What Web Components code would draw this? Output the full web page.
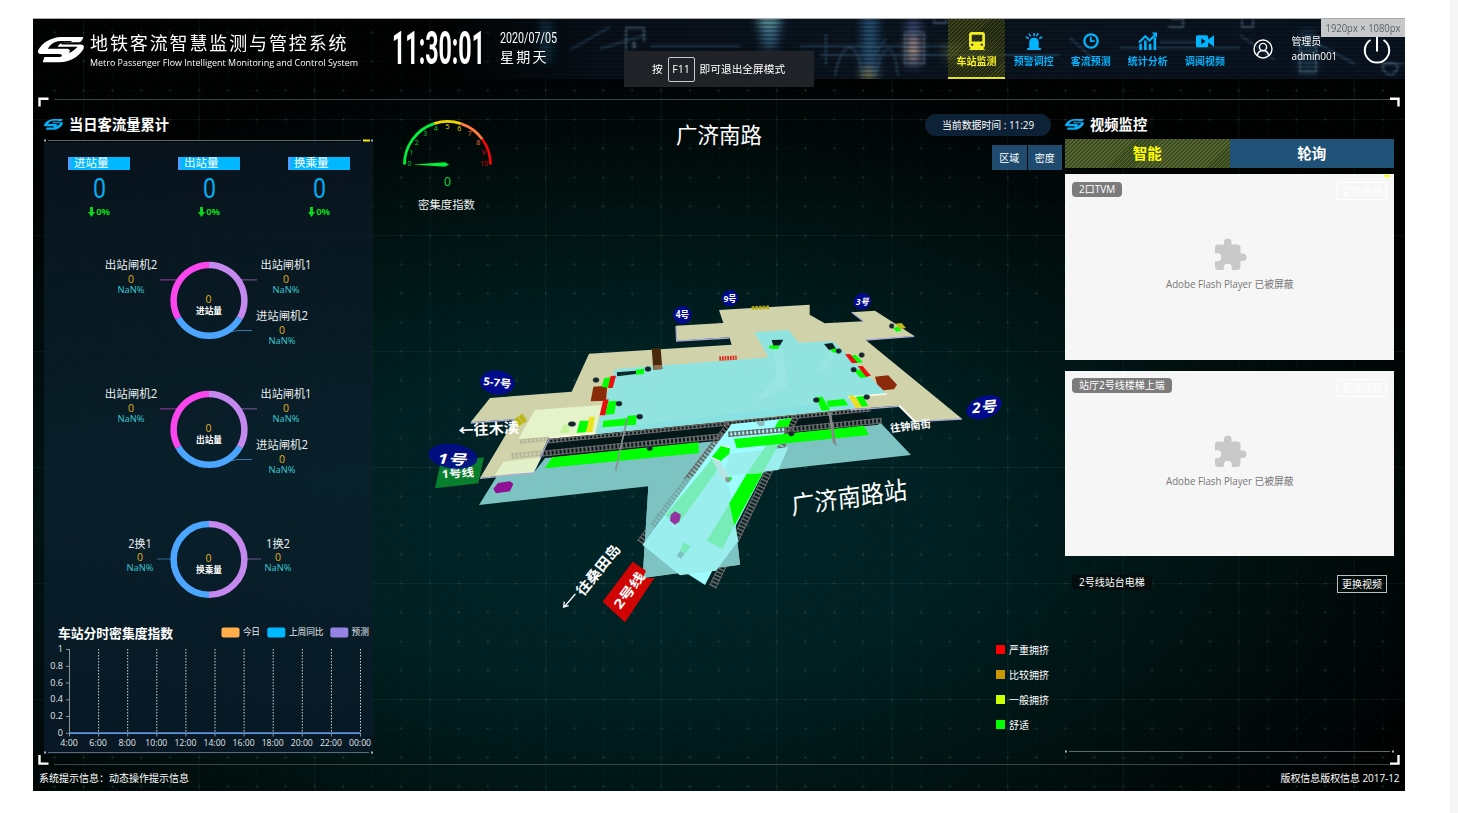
<!DOCTYPE html>
<html>
<head>
<meta charset="utf-8">
<title>地铁客流智慧监测与管控系统</title>
<style>
html{background:#fff}
body{margin:0;width:1458px;height:813px;overflow:hidden;display:flex;justify-content:space-between;background:#fff;font-family:"Open Sans","Noto Sans CJK SC",sans-serif;color:#fff}
.gutter{width:8px;background:#f6f6f6}
</style>
</head>
<body>
<metro-dashboard></metro-dashboard>
<div class="gutter"></div>
<script>
const define=(name,render,setup)=>customElements.define(name,class extends HTMLElement{
  connectedCallback(){
    if(this.shadowRoot)return;
    const root=this.attachShadow({mode:'open'});
    root.innerHTML=render(n=>this.getAttribute(n)||'',this);
    if(setup)setup(this,root);
  }
});
const F='font-family:"Open Sans","Noto Sans CJK SC",sans-serif';

/* Single line of text squeezed to a fixed width */
define('fit-text',a=>`<style>:host{display:block;line-height:0}svg{display:block;overflow:visible}text{font-family:Roboto,sans-serif}</style>
<svg width="${a('w')}" height="${a('h')}"><text x="0" y="${a('h')}" font-size="${a('size')}" font-weight="${a('weight')||400}" fill="currentColor" textLength="${a('w')}" lengthAdjust="spacingAndGlyphs">${a('text')}</text></svg>`);

define('metro-logo',()=>`<style>:host{display:block;color:#fff}svg{display:block;width:100%;height:100%}</style>
<svg viewBox="0 0 136 78" preserveAspectRatio="none"><path fill="currentColor" d="M134 0H68C38 1 12 18 1 40c-3 8 1 12 9 12h54c9 0 9 9 0 9H19l-5 16h48c34 0 58-17 71-38 6-11 1-16-8-16H74c-8 0-7-7 1-7h49c5-3 8-8 10-16z"/><path fill="#000" d="M66 12C48 13 35 24 29 36h55c11 0 13 7 6 14 12-5 21-13 27-20H58c4-10 14-15 30-15h10l2-3z"/></svg>`);

/* Bracketed frame around the working area */
define('screen-frame',()=>`<style>:host{position:absolute;left:5px;top:78px;width:1362px;height:668px;pointer-events:none}svg{display:block}</style>
<svg width="1362" height="668" fill="none"><path stroke="#3d4444" d="M16 2.5H1352M16 667.500H1352"/><path stroke="#fff" stroke-width="2.4" d="M1.5 9.500V1.700H10.500M1352 1.700H1360.500V9.500M1.500 658V666.600H10.500M1352 666.600H1360.500V658"/></svg>`);

define('header-art',()=>`<style>:host{position:absolute;inset:0 0 auto 0;height:60px;overflow:hidden}svg{display:block}</style>
<svg width="1372" height="60" viewBox="33 19 1372 60"><defs>
<linearGradient id="f" x1="33" x2="1405" gradientUnits="userSpaceOnUse"><stop offset=".3" stop-color="#071018" stop-opacity="0"/><stop offset=".42" stop-color="#08111a"/><stop offset=".62" stop-color="#0b1520"/><stop offset="1" stop-color="#091420"/></linearGradient>
<filter id="b" x="-1" y="-1" width="3" height="3"><feGaussianBlur stdDeviation="5"/></filter><filter id="c"><feGaussianBlur stdDeviation="1.1"/></filter>
<pattern id="s" width="6" height="4" patternUnits="userSpaceOnUse"><path d="M0 1H6" stroke="#02060c" stroke-opacity=".6"/></pattern></defs>
<rect x="33" y="19" width="1372" height="60" fill="url(#f)"/>
<g filter="url(#b)"><path d="M757 12H783L776 48H763z" fill="#356482" opacity=".9"/><ellipse cx="768" cy="20" rx="11" ry="10" fill="#5e9298" opacity=".8"/><path d="M862 10H878V80H862z" fill="#2c577d" opacity=".85"/><ellipse cx="868" cy="75" rx="7" ry="5" fill="#8a8a48"/><path d="M907 19H920V66H907z" fill="#48598c" opacity=".8"/><ellipse cx="913" cy="49" rx="6" ry="12" fill="#b49b92"/><path d="M540 20H552V62H540z" fill="#164052" opacity=".7"/><path d="M1300 30H1316V74H1300z" fill="#294b64" opacity=".6"/><path d="M940 45H1000L980 65H950z" fill="#6a7146" opacity=".5"/></g>
<g filter="url(#c)" fill="none" stroke="#3c6382" stroke-width="2" opacity=".55"><path d="M570 50L610 27M600 49L645 35M650 46H740M800 46H960M820 55H1060M835 76C842 38 858 38 863 78M875 76C884 40 894 40 898 76M826 34V65M874 55L886 39M1070 38L1095 60M1120 48H1240M1160 42H1200M1240 35L1275 60M1320 45L1355 64M1380 64H1405"/></g>
<g filter="url(#c)" fill="none" stroke="#59738c" opacity=".65"><path stroke-width="2" d="M626 51V28H644V42M905 33H924V64H905zM1171 19H1183V27H1168M1242 19V27H1253V19M1300 45V72H1316V45M934 19V23H946V19M1390 75C1380 70 1380 63 1390 63C1400 63 1400 70 1391 75"/><path fill="#75879b" d="M634 41l2 4-2 4-2-4z"/></g>
<rect x="500" y="19" width="905" height="60" fill="url(#s)"/></svg>`);

const ICONS={
 train:'<path fill="currentColor" fill-rule="evenodd" d="M3.500 0h10q2.500 0 2.500 2.500v10.500q0 2-2 2H3q-2 0-2-2V2.500Q1 0 3.500 0zM3.500 2.500v6.500h10V2.500zM3 11v2h2v-2zm9 0v2h2v-2z"/><path fill="currentColor" d="M3 14.500L1 17h15l-2-2.500z"/>',
 alarm:'<path fill="currentColor" d="M4 15V10q0-4.500 4.500-4.500T13 10v5h2v2H2v-2zM7.800 1h1.500v3H7.800zM3 2l1-.8 2.200 2.600-1 .8zM12 .8l1.200.8L11 4.500 10 3.700zM.5 5.500L1 4l3 1.500-.6 1.300zM16 4l.7 1.400-3 1.400-.7-1.300z"/>',
 clock:'<g fill="none" stroke="currentColor" stroke-width="2.200"><circle cx="8.500" cy="8.500" r="6.300"/><path d="M8.300 4.500v4.200H12" stroke-width="1.700"/></g>',
 stats:'<path fill="none" stroke="currentColor" stroke-width="2.400" d="M1.500 17v-6M6 17V8M10.500 17v-6M15 17V5"/><path fill="none" stroke="currentColor" stroke-width="2" d="M0 10l6-6 4 4 6-6"/><path fill="currentColor" d="M12 .5h5v5z"/>',
 video:'<path fill="currentColor" fill-rule="evenodd" d="M1.500 3H10q1.500 0 1.500 1.500V7L17 3v11l-5.500-4v3q0 1.500-1.500 1.500H1.500Q0 14.500 0 13V4.500Q0 3 1.500 3zM5 6v5.500l4-2.700z"/>'
};
define('nav-item',a=>`<style>:host{display:flex;box-sizing:border-box;width:57.100px;height:60px;padding-top:12.500px;flex-direction:column;align-items:center;color:#00b4ff;font-size:10px;font-weight:700;line-height:15px}
:host([active]){color:#f4f020;background:repeating-linear-gradient(135deg,#656b1c99 0 1px,#30350c99 1px 2.800px);border-bottom:2px solid #e6e22a}
svg{width:18px;height:18px;margin-bottom:4.500px;overflow:visible}</style><svg viewBox="0 0 17 17">${ICONS[a('icon')]}</svg><span><slot></slot></span>`);

define('top-bar',()=>`<style>
:host{display:flex;position:relative;height:60px;flex:none}
.brand,.clock,.date,nav,.user,.power{position:relative}
metro-logo.l{width:46px;height:25.500px;margin:18px 0 0 5px;position:relative}
.brand{margin-left:6px;width:302px;white-space:nowrap}
.t{font-size:18px;letter-spacing:1.880px;line-height:24px;margin-top:12px}
.s{font-size:8.800px;line-height:12px;margin-top:.5px;letter-spacing:0}
.clock{padding-top:12px;width:108px}
.date{padding-top:12px;width:448px}
.w{font-size:14px;letter-spacing:2.300px;line-height:18px;margin-top:4.500px}
nav{display:flex}
.user{display:flex;padding-left:20px;width:130px;box-sizing:border-box;gap:18px;font-size:10px;line-height:15px;padding-top:15px;white-space:nowrap;letter-spacing:-.15px}
.user svg{margin-top:5px}
.power{padding-top:15.500px}
svg{display:block;flex:none}
</style><header-art></header-art><metro-logo class="l"></metro-logo>
<div class="brand"><div class="t">地铁客流智慧监测与管控系统</div><div class="s"><svg width="268" height="13" style="overflow:visible"><text x="0" y="9.500" fill="#fff" font-size="9.200" textLength="268" lengthAdjust="spacingAndGlyphs">Metro Passenger Flow Intelligent Monitoring and Control System</text></svg></div></div>
<div class="clock"><fit-text w="93" h="33" size="46" weight="700" text="11:30:01"></fit-text></div>
<div class="date"><fit-text w="57" h="12" size="15.500" weight="400" text="2020/07/05"></fit-text><div class="w">星期天</div></div>
<nav><nav-item icon="train" active>车站监测</nav-item><nav-item icon="alarm">预警调控</nav-item><nav-item icon="clock">客流预测</nav-item><nav-item icon="stats">统计分析</nav-item><nav-item icon="video">调阅视频</nav-item></nav>
<div class="user"><svg width="20" height="20" viewBox="0 0 20 20" fill="none" stroke="#fff" stroke-width="1.400"><circle cx="10" cy="10" r="9"/><circle cx="10" cy="8" r="3.600"/><path d="M4.500 16q1-4.500 5.500-4.500t5.500 4.500"/></svg><div>管理员<br>admin001</div></div>
<div class="power"><svg width="28" height="30" viewBox="0 0 28 30" fill="none" stroke="#fff" stroke-width="2"><path d="M7.500 5A12.200 12.200 0 1 0 20.500 5M14 1.500v15"/></svg></div>`);

define('panel-title',()=>`<style>:host{display:flex;height:29px;align-items:center;gap:6px;font-size:14.300px;font-weight:700;line-height:20px}metro-logo{width:19px;height:11px;color:#0aaef4}span{padding-top:2px}</style><metro-logo></metro-logo><span><slot></slot></span>`);
define('panel-rule',(a,e)=>`<style>:host{display:block;height:3px}svg{display:block}</style><svg width="329" height="3"><path stroke="#5d6a70" d="M4 1.500H${e.hasAttribute('accent')?317:325}"/><path stroke="#aab4b8" stroke-width="2" d="M0 1.500H2M327 1.500H329"/>${e.hasAttribute('accent')?'<path stroke="#f4ee10" stroke-width="2" d="M319 1.500H326"/>':''}</svg>`);

define('stat-card',a=>`<style>:host{display:flex;flex-direction:column;align-items:center;width:62px}
.l{box-sizing:border-box;width:62px;height:13px;background:#00b8ff;border-left:3px solid #4b9cff;padding-left:3px;font-size:11.500px;line-height:12px}
fit-text{margin-top:8px;color:#06adf0}.p{display:flex;gap:1px;align-items:center;font-size:9.500px;font-weight:700;line-height:12px;color:#0bd61d;margin-top:9px;letter-spacing:-.3px}</style>
<div class="l"><slot></slot></div><fit-text w="13" h="19.500" size="27" weight="400" text="${a('value')}"></fit-text>
<div class="p"><svg width="7" height="10"><path fill="#0bd61d" d="M2 0h3v5h2L3.500 10 0 5h2z"/></svg><span>0%</span></div>`);

const tx=(s,x,y,size,fill,w,extra='')=>`<text x="${x}" y="${y}" font-size="${size}" fill="${fill}" text-anchor="middle" ${w?`textLength="${w}" lengthAdjust="spacingAndGlyphs"`:''} ${extra}>${s}</text>`;
const lab=(s,x,y,w)=>tx(s,x,y,11.7,'#eceff0',w)+tx('0',x,y+13.700,10.500,'#e3b021')+tx('NaN%',x,y+23.500,9,'#3cc8d4',27);
define('flow-donut',(a,e)=>{
  const two=e.hasAttribute('two'),R=35.4,cx=165,cy=64.400;
  const arc=(d0,d1,c)=>{const p=d=>[cx+R*Math.sin(d*Math.PI/180),cy-R*Math.cos(d*Math.PI/180)].map(v=>v.toFixed(2)).join(' ');return `<path d="M${p(d0)}A${R} ${R} 0 0 1 ${p(d1)}" fill="none" stroke="${c}" stroke-width="6.500"/>`};
  return `<style>:host{display:block;height:128.900px}svg{display:block}text{${F}}</style><svg width="329" height="128.900">`+
  (two?`<path d="M113 64H127" stroke="#326695"/><path d="M203 64H217" stroke="#77569a"/>`+arc(0,180,'#c488ee')+arc(180,360,'#4ca5ff')+lab('2换1',96,52.500,23.500)+lab('1换2',234,52.500,24)
  :`<path d="M116 43.900H133" stroke="#a03aa5"/><path d="M197 43.900H213" stroke="#805ca0"/><path d="M187 96L193 94.500H208" fill="none" stroke="#357ab5"/>`+arc(0,120,'#c488ee')+arc(120,240,'#4ca5ff')+arc(240,360,'#fb45ee')+lab('出站闸机2',87,33,52.500)+lab('出站闸机1',242,33,51)+lab('进站闸机2',238,84,52))+
  tx('0',164.500,67,10.500,'#e3b021')+tx(a('label'),165,77.700,8.700,'#fff',26,'font-weight="700"')+`</svg>`});

define('density-chart',()=>{
  let s='';
  for(let i=0;i<6;i++){const y=25.500+i*16.760;s+=`<path stroke="#8b949a" d="M22 ${y.toFixed(1)}H25.500"/><text x="19" y="${y+2.500}" font-size="9" text-anchor="end" fill="#e2e6e8">${['1','0.8','0.6','0.4','0.2','0'][i]}</text>`}
  for(let i=0;i<11;i++){const x=25.500+i*29.100;if(i)s+=`<path stroke="#d0d4d6" stroke-dasharray="1.500 1.500" d="M${x} 25V109"/>`;s+=`<path stroke="#8b949a" d="M${x} 109v3.500"/>`+tx(['4:00','6:00','8:00','10:00','12:00','14:00','16:00','18:00','20:00','22:00','00:00'][i],x-.5,121.500,9,'#e2e6e8',i<3?17.500:22)}
  const lg=(x,c,t,tx0,w)=>`<rect x="${x}" y="3.500" width="18" height="10" rx="2" fill="${c}"/><text x="${tx0}" y="11" font-size="8.700" fill="#e8edf0" textLength="${w}">${t}</text>`;
  return `<style>:host{display:block;height:127px}svg{display:block;overflow:visible}text{${F}}</style><svg width="329" height="127"><text x="14" y="13.800" font-size="12.800" font-weight="700" fill="#fff" textLength="115">车站分时密集度指数</text>${lg(177.500,'#ffae4b','今日',199,17)+lg(223.300,'#00b8ff','上周同比',245,34.500)+lg(286.300,'#9583e4','预测',307.500,17.500)}<path stroke="#8b949a" d="M25.500 25V112"/>${s}<path stroke="#9583e4" stroke-width="1.600" d="M25.500 109.200H316.500"/><path stroke="#38a4dd" stroke-width="1.600" stroke-dasharray="2 1" d="M25.500 109H316.500"/></svg>`});

define('left-panel',()=>`<style>:host{display:block}.body{height:612px;background:linear-gradient(#09151fe6,#09202be6 55%,#081927e6);display:flex;flex-direction:column}
.stats{display:flex;justify-content:space-between;padding:15.200px 23px 0 24px;height:81.100px}
.c{margin-top:auto}</style>
<panel-title>当日客流量累计</panel-title><panel-rule accent></panel-rule><div class="body"><div class="stats"><stat-card value="0">进站量</stat-card><stat-card value="0">出站量</stat-card><stat-card value="0">换乘量</stat-card></div>
<div class="donuts"><flow-donut label="进站量"></flow-donut><flow-donut label="出站量"></flow-donut><flow-donut two label="换乘量" style="margin-top:.7px"></flow-donut></div><density-chart class="c"></density-chart><panel-rule></panel-rule></div>`);

define('density-gauge',()=>{
  const cx=74.500,cy=54.500,pt=(r,v)=>{const t=Math.PI*(1-v/10);return [(cx+r*Math.cos(t)).toFixed(1),(cy-r*Math.sin(t)).toFixed(1)]};
  const arc=(a,b,c)=>`<path fill="none" stroke="${c}" stroke-width="2.800" d="M${pt(43,a)}A43 43 0 0 1 ${pt(43,b)}"/>`;
  let s=arc(0,4,'#00f03c')+arc(4,6,'#f0d800')+arc(6,8,'#ff7a40')+arc(8,10,'#ee0808');
  for(let v=0;v<=10;v++){const p=pt(v==10?36.500:38,v);s+=`<text x="${p[0]}" y="${+p[1]+(v==0||v==10?1:2.500)}" font-size="7" text-anchor="middle" fill="${v<5?'#00c83f':v<7?'#f0dc00':v<9?'#f0703c':'#c81010'}">${v}</text>`}
  return `<style>:host{display:block}svg{display:block;overflow:visible}text{${F}}</style><svg width="150" height="104">${s}<path fill="#00f03c" d="M40 54.500L72 52.300l4 2.200-4 2.200z"/>${tx('0',74.500,75.500,12.500,'#0bd840')}${tx('密集度指数',73.500,99,11.400,'#eceeee',57)}</svg>`});

define('status-legend',()=>`<style>:host{display:grid;gap:15px}div{display:flex;gap:4px;height:10px;align-items:center;font-size:10px;line-height:10px}i{width:9px;height:9px;background:var(--c)}</style><div style="--c:#ff0000"><i></i>严重拥挤</div><div style="--c:#c99700"><i></i>比较拥挤</div><div style="--c:#ccff00"><i></i>一般拥挤</div><div style="--c:#00ff00"><i></i>舒适</div>`);

/* Perspective view of the interchange; drawing units are thirds of a pixel */
define('station-map',()=>{
  const track=(x1,y1,x2,y2,w,o=1)=>`<g stroke="#686868" opacity="${o}"><path stroke-width="${w}" stroke-dasharray="6 6" d="M${x1} ${y1}L${x2} ${y2}"/><path stroke-width="3" d="M${x1} ${y1-w/2.6}L${x2} ${y2-w/2.6}M${x1} ${y1+w/2.600}L${x2} ${y2+w/2.600}"/></g>`;
  const vt=(x1,y1,x2,y2,w,o=1)=>`<g stroke="#686464" opacity="${o}"><path stroke-width="${w}" stroke-dasharray="5 6" d="M${x1} ${y1}L${x2} ${y2}"/><path stroke-width="3" d="M${x1-w/3} ${y1-5}L${x2-w/3} ${y2-5}M${x1+w/3} ${y1+5}L${x2+w/3} ${y2+5}"/></g>`;
  const g=(p,c='#00ff00')=>`<path fill="${c}" d="${p}"/>`;
  const dot=(x,y,r=9)=>`<ellipse cx="${x}" cy="${y}" rx="${r}" ry="7" fill="#14242b" stroke="#34434b" stroke-width="2"/>`;
  const disc=(x,y,rx,ry,rot,o=1)=>`<ellipse rx="${rx}" ry="${ry}" transform="translate(${x} ${y}) rotate(${rot})" fill="#020b8c" opacity="${o}"/>`;
  const badge=(x,y,rx,ry,rot,t,size,w)=>disc(x,y,rx,ry,rot)+`<text transform="translate(${x} ${y}) rotate(${rot})" y="${size*.36}" font-size="${size}" textLength="${w}" lengthAdjust="spacingAndGlyphs" font-weight="700" text-anchor="middle" fill="#fff">${t}</text>`;
  return `<style>:host{display:block}svg{display:block}text{${F}}</style><svg width="692" height="537" viewBox="-141 -200 2076 1611">
${g('M177 673L240 572L345 572L385 520L1380 425L1473 523L920 583L945 720L960 852L668 892L685 617z','#7dc3c1')}
${g('M387 472L1290 382L1380 425L1375 432L378 532L362 520z','#041719')}
${track(385,482,1353,386,12)}${track(365,519,1385,420,18)}
${vt(660,785,930,430,22,1)}${vt(878,918,1125,410,24,1)}
${g('M685 617L905 570L945 720L960 852L668 892z','#7dc3c1')}
<g opacity=".3">${vt(700,735,890,485,22)}</g>
${g('M935 430L1115 412L855 913L668 793z','#9ffcff')}
${g('M668 793L875 540L905 570L930 630L945 735L955 780L888 870L780 884z','#9aeeed')}
${g('M905 588L1075 568L1105 500L930 520z','#9aeeed')}
${g('M735 705L880 530L898 560L775 730z','#77ecb9')}${g('M870 540L905 490L927 505L893 560z','#77ecb9')}
${g('M860 780L928 670L943 735L907 805z','#77ecb9')}${g('M928 668L980 580L1028 577L943 735z')}${g('M980 580L1048 480L1085 475L1028 577z','#77ecb9')}
${g('M1077 418L1115 413L1105 440L1063 443z')}
${track(925,461,1115,445,16)}
${g('M375 563L397 530L835 485L837 517z')}${g('M942 475L1332 435L1347 463L950 503z')}
${g('M152 425L210 352L455 333L507 219L935 192L928 170L770 180L768 135L910 127L897 88L1169 72V102L1214 128L1330 122L1295 95L1365 90L1483 166L1337 178L1626 414L1485 423L1437 375L1290 386L530 460L385 472L340 575L180 592L285 415z','#d0d3aa')}
<path fill="none" stroke="#a9abd5" stroke-width="4" d="M152 427L285 417M180 593L340 577L387 474M1290 388L1437 377M1485 423L1626 415M768 137L770 181L928 172M1337 178L1483 167M1295 95L1330 122"/>
<path stroke="#fff" stroke-width="6" d="M1437 375L1485 423"/>
${g('M585 265L1046 230L1003 155L1105 148L1135 186L1240 182L1400 340L1285 350L1305 383L525 460z','#90e3df')}
${g('M630 435L1285 360L1295 384L525 460z','#86e1e0')}
${g('M1060 207L1088 204L1104 318L1000 365L1070 290zM1225 215L1250 210L1215 275L1190 275z','#98e5e2')}
${g('M345 388L545 373L525 460L295 475z','#e5f3cb')}${g('M250 543L364 530L340 575L225 583z','#e3f1cb')}
<path stroke="#fffbe0" stroke-width="5" fill="none" d="M387 472L527 458M1285 349L1400 340"/>
<g opacity=".25">${track(300,483,385,474,12)}${track(275,526,365,517,16)}</g>
${g('M695 203L722 203L727 265L700 267z','#48290a')}${g('M700 254L726 252L727 265L701 267z','#92704f')}
${g('M520 318L562 315L558 360L512 362z','#872b09')}${g('M1365 288L1405 284L1431 312L1422 326L1390 329L1371 310z','#8c2b0b')}
${g('M590 275L648 270V280L592 287z','#0b2a2b')}${g('M648 267L672 264V280L649 282z')}${dot(684,265)}
${g('M553 292L572 290L565 322L545 318z')}${g('M572 286L588 285L578 322L564 322z','#ea1010')}${dot(528,298)}
${g('M550 357L566 356L556 404H539z','#ea1010')}${g('M565 362L590 360L583 400L556 402z')}${dot(597,369)}
${g('M550 420L622 413V405L650 404L648 432L547 440z')}${dot(659,408)}
${g('M480 420L507 420L498 455L470 456z')}${g('M508 408L525 408L517 454H499z','#e9e51c')}${g('M430 433L448 430V456L420 458z','#c4f59a')}${dot(456,430,11)}
<path fill="none" stroke="#bdb514" stroke-width="26" stroke-dasharray="12 2" d="M291 425L316 409"/>
<path stroke="#8b9292" stroke-width="5" d="M622 412L600 510L587 570"/>${dot(689,503,8)}
${g('M1055 178L1090 177L1080 194L1060 196z','#0b1e22')}${g('M1050 194L1080 196L1073 206L1046 203z')}
${g('M1212 190L1237 187L1250 207L1226 207z','#0b1e22')}${g('M1230 207L1245 203L1262 214L1240 216z')}${dot(1256,211,8)}
${g('M1290 225L1307 222L1329 245L1307 248z')}${g('M1275 221L1290 220L1313 246L1296 248z','#ea1010')}${dot(1325,223,8)}
${g('M1300 268L1320 267L1345 289L1322 292z')}${g('M1313 257L1328 256L1353 285L1338 288z','#ea1010')}${dot(1301,267,8)}
${g('M1188 350L1207 348L1230 388L1205 390z')}${g('M1220 360L1272 355L1285 374L1225 379z')}${dot(1189,358,9)}
${g('M1285 343L1302 346L1326 378L1309 382z','#eadf18')}${g('M1308 348L1328 346L1345 376L1325 378z')}${dot(1340,349,9)}
${g('M1225 395L1233 395L1250 498L1238 485z','#858b8b')}${dot(1114,459,8)}
${g('M1008 424L1033 420V435L1018 437z','#8bb9b7')}
${g('M1418 142L1434 138L1445 150L1430 153z')}${g('M1425 129L1445 127L1458 142L1440 146z','#bdb81c')}${dot(1415,136,7)}
<path stroke="#e12214" stroke-width="13" stroke-dasharray="5 3" d="M898 234L950 231"/><path stroke="#b3a911" stroke-width="11" stroke-dasharray="8 3" d="M995 82L1047 80"/>
${g('M220 624L234 607L270 602L280 610L270 632L228 638z','#8f1094')}
${g('M904 495L930 500L928 520L900 542L875 530z')}<path stroke="#fff" stroke-width="4" fill="none" d="M904 494L930 501M875 531L900 542"/>${g('M876 537L901 542L925 584L910 600z','#b5e5e4')}${g('M915 590L936 590L928 605H918z','#8a9696')}${g('M925 590L936 590L932 602z')}
${g('M752 702L765 692L783 702L778 722L765 732L750 720z','#94359f')}${g('M792 785L811 797L798 818L780 808z','#77ecb9')}${g('M780 810L795 818L783 834L770 826z','#7dc3c1')}
${g('M638 843L678 870L668 892L703 892L615 1025L548 963z','#d10404')}
${g('M62 545L192 530L175 608L45 623z','#097e2c')}
<g fill="#fff" font-weight="700"><text transform="translate(66 593) rotate(-4)" font-size="34" textLength="97" lengthAdjust="spacingAndGlyphs">1号线</text>
<text transform="translate(601 988) rotate(-53)" font-size="39" textLength="126" lengthAdjust="spacingAndGlyphs">2号线</text>
<text transform="translate(116 466) rotate(-3)" font-size="44" textLength="182" lengthAdjust="spacingAndGlyphs">←往木渎</text>
<text transform="translate(489 948) rotate(-51)" font-size="42" textLength="182" lengthAdjust="spacingAndGlyphs">往桑田岛</text>
<text transform="translate(1412 455) rotate(-7)" font-size="32" textLength="122" lengthAdjust="spacingAndGlyphs">往钟南街</text></g>
<path d="M466 940L434 977M433 963L431 979L446 975" stroke="#fff" stroke-width="4" fill="none"/>
<text transform="translate(1116 702) rotate(-8) skewX(-4)" font-size="75" fill="#fff" textLength="350" lengthAdjust="spacingAndGlyphs">广济南路站</text>
${badge(787,103,28,27,0,'4号',29,40)}${badge(930,53,25,24,0,'9号',28,38)}${disc(1327,62,27,24,-25)}<text x="1327" y="72" text-anchor="middle" font-size="27" font-weight="700" font-style="italic" fill="#fff" textLength="38" lengthAdjust="spacingAndGlyphs">3号</text>${badge(232,306,52,36,7,'5-7号',32,84)}
${disc(99,527,74,37,7,.88)}<text x="96" y="551" transform="rotate(3 96 540)" text-anchor="middle" font-size="42" font-weight="700" font-style="italic" fill="#fff" textLength="84" lengthAdjust="spacingAndGlyphs">1号</text>
${disc(1692,380,55,33,-20)}<text x="1692" y="395" transform="rotate(-5 1692 380)" text-anchor="middle" font-size="43" font-weight="700" font-style="italic" fill="#fff" textLength="72" lengthAdjust="spacingAndGlyphs">2号</text>
</svg>`});

define('center-stage',()=>`<style>:host{display:grid;grid-template-rows:104px 537px}
.top{display:flex;position:relative}.title{flex:1;text-align:center;font-size:21.500px;line-height:28px;padding:11px 10px 0 0}.tools{width:140px;display:flex;flex-direction:column;padding-top:4.500px}
.pill{width:126px;height:22px;border-radius:11px;background:#0e2237;font-size:9.900px;line-height:22px;text-align:center}.btns{display:flex;gap:1px;margin:9px 0 0 67px}.btns button{all:unset;width:34.500px;height:25px;background:#1e4b6e;font-size:10px;line-height:26px;text-align:center}
.map{display:grid}.map>*{grid-area:1/1}status-legend{align-self:end;justify-self:end;margin:0 16px 21px 0}</style>
<div class="top"><density-gauge></density-gauge><div class="title">广济南路</div><div class="tools"><div class="pill">当前数据时间 : 11:29</div><div class="btns"><button>区域</button><button>密度</button></div></div></div>
<div class="map"><station-map></station-map><status-legend></status-legend></div>`);

define('video-card',(a,e)=>`<style>:host{display:block;box-sizing:border-box;height:185.500px;position:relative;background:#f6f6f6;padding:7.500px 7px 0}:host([empty]){background:none}
.h{display:flex;justify-content:space-between;align-items:flex-start;font-size:10px}.tag{border-radius:4px;background:#7b7b7b;height:15px;line-height:14px;padding:0 7px}:host([empty]) .tag{background:#050d0d}
.b{box-sizing:border-box;border:1px solid #fff;width:50px;height:18px;line-height:16px;text-align:center;margin-top:.5px}
:host([empty]) .b{border-color:#bbc0c0}.m{display:flex;flex-direction:column;align-items:center;margin-top:37px}.m svg{display:block;overflow:visible}
.y{position:absolute;right:4px;top:1px;width:6px;height:2px;background:#ff0}</style>${e.hasAttribute('accent')?'<i class="y"></i>':''}<div class="h"><span class="tag">${a('name')}</span><span class="b">更换视频</span></div>
${e.hasAttribute('empty')?'':`<div class="m"><svg width="36" height="36" viewBox="0 0 24 24"><path fill="#c9c9c9" d="M20.500 11H19V7c0-1.100-.9-2-2-2h-4V3.500a2.500 2.500 0 0 0-5 0V5H4c-1.100 0-2 .9-2 2v3.800h1.500a2.700 2.700 0 0 1 0 5.400H2V20c0 1.100.9 2 2 2h3.800v-1.500a2.700 2.700 0 0 1 5.400 0V22H17c1.100 0 2-.9 2-2v-4h1.500a2.500 2.500 0 0 0 0-5z"/></svg><svg width="129" height="22"><text x="1" y="15" font-size="10.500" fill="#777" textLength="127.500" lengthAdjust="spacingAndGlyphs">Adobe Flash Player 已被屏蔽</text></svg></div>`}`);

define('video-panel',()=>`<style>:host{display:block}.tabs{display:grid;grid-template-columns:1fr 1fr;height:28px;font-size:14.500px;line-height:29px;font-weight:700;text-align:center}.a{color:#ff0;background:repeating-linear-gradient(135deg,#59692f 0 1.200px,#39491f 1.200px 2.800px)}.b{background:#205277}.list{display:grid;gap:11px;padding-top:7.500px;height:577px;align-content:start;box-sizing:border-box}</style>
<panel-title>视频监控</panel-title><div class="tabs"><div class="a">智能</div><div class="b">轮询</div></div><div class="list"><video-card accent name="2口TVM"></video-card><video-card name="站厅2号线楼梯上端"></video-card><video-card empty name="2号线站台电梯"></video-card></div><panel-rule style="margin-top:6px"></panel-rule>`);

define('fullscreen-toast',()=>`<style>:host{position:absolute;left:591px;top:32px;width:190px;height:36px;background:#22242aee;display:flex;align-items:center;justify-content:center;font-size:10.700px;gap:5px;box-sizing:border-box;padding:1px 1px 0 0}kbd{font:10.700px "Open Sans",sans-serif;border:1px solid #c9cbce;border-radius:2px;width:25px;height:23px;line-height:23px;text-align:center}</style><span>按</span><kbd>F11</kbd><span>即可退出全屏模式</span>`);
define('size-badge',()=>`<style>:host{position:absolute;right:0;top:0;width:84px;height:17.500px;background:#c7c8c9;display:flex;align-items:center;justify-content:center}svg{overflow:visible}text{${F}}</style><svg width="76" height="17.500"><text x="0.500" y="13" font-size="10.300" fill="#5f6062" textLength="75" lengthAdjust="spacingAndGlyphs">1920px × 1080px</text></svg>`);

define('dot-grid',()=>{
  let d='',l='',x='';
  for(let i=0;i<4;i++)for(let j=0;j<4;j++){const a=i*28.880,b=j*29;d+=`<circle cx="${a+.5}" cy="${b+.5}" r=".9"/>`;}
  for(let k=0;k<4;k++){const a=k*28.880,b=k*29;l+=`M${a+.5} 0V116M0 ${b+.5}H115.500`;x+=`M${a} 0L115.500 ${116-b}M0 ${b}L${115.500-a} 116M${a} 116L115.500 ${b}M0 ${116-b}L${115.500-a} 0`}
  return `<style>:host{position:absolute;inset:0}svg{display:block}</style><svg width="1372" height="772"><defs><pattern id="g" x="50" y="100" width="115.520" height="116" patternUnits="userSpaceOnUse"><path d="${l}" stroke="#5a8585" stroke-opacity=".03"/><path d="${x}" stroke="#3a7070" stroke-opacity=".03" fill="none"/><path d="M.5 0V116M0 .5H116" stroke="#6a9a9a" stroke-opacity=".06"/><g fill="#7d9c9c" fill-opacity=".24">${d}</g></pattern></defs><rect width="1372" height="772" fill="url(#g)"/></svg>`});

define('metro-dashboard',()=>`<style>:host{display:block;margin:18px 0 0 33px;width:1372px;height:773px;box-sizing:border-box;border-top:1px solid #aaa}
.screen{position:relative;width:1372px;height:772px;overflow:hidden;display:flex;flex-direction:column;background:radial-gradient(ellipse 860px 450px at 600px 500px,#002426 0,#002123 35%,#00100f 72%,#000202 100%);line-height:1.300}
main,footer{position:relative}
main{display:grid;grid-template-columns:329px 692px 329px;padding:12.500px 11px 0;margin-top:18px;height:661px;box-sizing:border-box}
footer{display:flex;justify-content:space-between;padding:11px 5.500px 0 6px;font-size:10px;line-height:18px}
footer span:last-child{letter-spacing:-.07px}
</style><div class="screen"><dot-grid></dot-grid><top-bar></top-bar><main><left-panel></left-panel><center-stage></center-stage><video-panel></video-panel></main><footer><span>系统提示信息：动态操作提示信息</span><span>版权信息版权信息 2017-12</span></footer><screen-frame></screen-frame><fullscreen-toast></fullscreen-toast><size-badge></size-badge></div>`);
</script>
</body>
</html>
